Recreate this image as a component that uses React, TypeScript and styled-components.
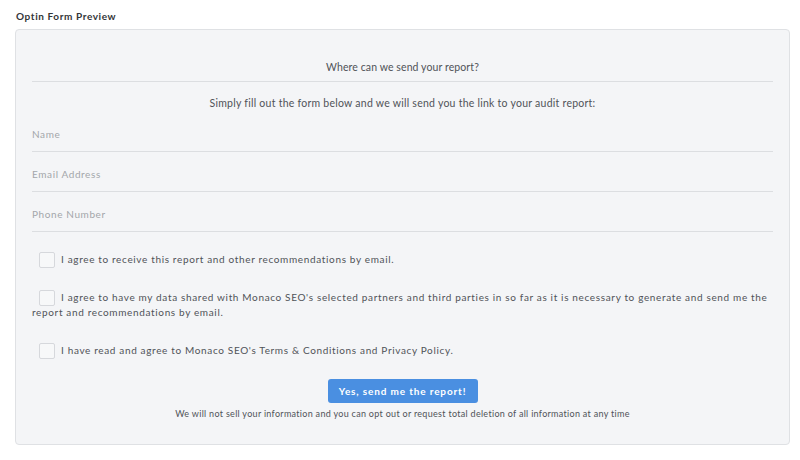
import React from 'react';
import styled, { createGlobalStyle } from 'styled-components';

const GlobalStyle = createGlobalStyle`
  body {
    margin: 0;
    background: #ffffff;
    font-family: Lato, "Liberation Sans", sans-serif;
    color: #505357;
  }
`;

const StyledPage = styled.div`
  width: 800px;
  height: 460px;
  padding: 10px 10px 0 15px;
  box-sizing: border-box;
`;

const StyledTitle = styled.div`
  font-size: 10px;
  font-weight: 700;
  line-height: 13px;
  letter-spacing: 0.6px;
  color: #333538;
  padding-left: 1px;
  margin-bottom: 6px;
`;

const StyledPanel = styled.div`
  background: #f4f5f7;
  border: 1px solid #dfe1e4;
  border-radius: 4px;
  padding: 29px 16px 24px 16px;
`;

const StyledHeading = styled.div`
  text-align: center;
  font-size: 10.5px;
  line-height: 16px;
  letter-spacing: 0.1px;
  padding-bottom: 6px;
  border-bottom: 1px solid #dcdee1;
`;

const StyledIntro = styled.div`
  text-align: center;
  font-size: 10.5px;
  line-height: 16px;
  letter-spacing: 0.25px;
  margin-top: 13px;
  margin-bottom: 1px;
`;

const StyledField = styled.div`
  padding: 14px 0 9px 0;
  font-size: 10px;
  line-height: 16px;
  letter-spacing: 0.6px;
  color: #a3a6aa;
  border-bottom: 1px solid #dcdee1;
`;

const StyledConsents = styled.div`
  display: flex;
  flex-direction: column;
  gap: 23px;
  margin-top: 20px;
`;

const StyledConsent = styled.label`
  display: block;
  font-size: 10px;
  line-height: 15px;
  letter-spacing: 0.65px;
`;

const StyledBox = styled.span`
  display: inline-block;
  width: 14px;
  height: 14px;
  margin: -2px 6px -2px 7px;
  vertical-align: middle;
  background: #f7f8f9;
  border: 1px solid #d6d8dc;
  border-radius: 2px;
`;

const StyledActions = styled.div`
  display: flex;
  flex-direction: column;
  align-items: center;
  margin-top: 21px;
`;

const StyledButton = styled.button`
  width: 150px;
  height: 24px;
  border: none;
  border-radius: 3px;
  background: #4a8fe1;
  color: #ffffff;
  font-family: Lato, "Liberation Sans", sans-serif;
  font-size: 10px;
  font-weight: 700;
  letter-spacing: 0.85px;
  cursor: pointer;
`;

const StyledNote = styled.div`
  margin-top: 5px;
  font-size: 9px;
  line-height: 12px;
  letter-spacing: 0.3px;
`;

const fields = ['Name', 'Email Address', 'Phone Number'];

const consents = [
  'I agree to receive this report and other recommendations by email.',
  "I agree to have my data shared with Monaco SEO's selected partners and third parties in so far as it is necessary to generate and send me the report and recommendations by email.",
  "I have read and agree to Monaco SEO's Terms & Conditions and Privacy Policy.",
];

export default function App() {
  return (
    <>
      <GlobalStyle />
      <StyledPage>
        <StyledTitle>Optin Form Preview</StyledTitle>
        <StyledPanel>
          <StyledHeading>Where can we send your report?</StyledHeading>
          <StyledIntro>
            Simply fill out the form below and we will send you the link to your audit report:
          </StyledIntro>
          {fields.map((f) => (
            <StyledField key={f}>{f}</StyledField>
          ))}
          <StyledConsents>
            {consents.map((c) => (
              <StyledConsent key={c}>
                <StyledBox />
                {c}
              </StyledConsent>
            ))}
          </StyledConsents>
          <StyledActions>
            <StyledButton>Yes, send me the report!</StyledButton>
            <StyledNote>
              We will not sell your information and you can opt out or request total deletion of all information at any time
            </StyledNote>
          </StyledActions>
        </StyledPanel>
      </StyledPage>
    </>
  );
}
